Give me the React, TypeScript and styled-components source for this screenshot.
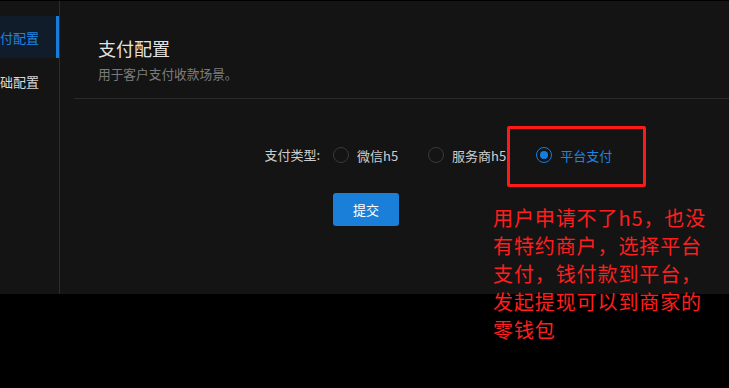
import styled, { createGlobalStyle } from 'styled-components';

const GlobalStyle = createGlobalStyle`
  html, body {
    margin: 0;
    padding: 0;
    background: #000;
  }
  body {
    font-family: "Noto Sans CJK SC", "Noto Sans", sans-serif;
  }
`;

const Page = styled.div`
  position: relative;
  min-height: 100vh;
  padding-top: 1px;
  box-sizing: border-box;
`;

const Shell = styled.div`
  height: 293px;
  display: flex;
  background: #141414;
`;

const Sidebar = styled.nav`
  width: 59px;
  flex: none;
  border-right: 1px solid #2d2d2d;
  padding-top: 15px;
  display: flex;
  flex-direction: column;
  gap: 2px;
`;

const MenuItem = styled.div<{ $active?: boolean }>`
  height: 42px;
  display: flex;
  align-items: center;
  justify-content: flex-end;
  padding-right: ${({ $active }) => ($active ? '17px' : '20px')};
  overflow: hidden;
  white-space: nowrap;
  font-size: 13px;
  color: ${({ $active }) => ($active ? '#1f84e0' : 'rgba(255,255,255,0.85)')};
  background: ${({ $active }) => ($active ? '#111c2b' : 'transparent')};
  border-right: ${({ $active }) => ($active ? '3px solid #177ddc' : 'none')};
`;

const Main = styled.main`
  flex: 1;
  margin-left: 14px;
  display: flex;
  flex-direction: column;
`;

const Header = styled.header`
  padding: 34px 24px 0;
  border-bottom: 1px solid #2a2a2a;
  box-sizing: border-box;
  height: 98px;
`;

const Title = styled.h2`
  margin: 0;
  font-size: 18px;
  line-height: 26px;
  font-weight: 400;
  color: rgba(255, 255, 255, 0.9);
`;

const Subtitle = styled.p`
  margin: 3px 0 0;
  font-size: 12.7px;
  line-height: 20px;
  color: rgba(255, 255, 255, 0.45);
`;

const Form = styled.form`
  margin-top: 40px;
  display: grid;
  grid-template-columns: 259px 1fr;
  row-gap: 22px;
  align-items: center;
`;

const Label = styled.label`
  text-align: right;
  padding-right: 13px;
  font-size: 13px;
  line-height: 32px;
  color: rgba(255, 255, 255, 0.8);
`;

const RadioGroup = styled.div`
  display: flex;
  align-items: center;
  height: 32px;
`;

const RadioOption = styled.span<{ $checked?: boolean }>`
  display: inline-flex;
  align-items: center;
  gap: 8px;
  margin-right: 30px;
  font-size: 13px;
  color: ${({ $checked }) => ($checked ? '#1f84e0' : 'rgba(255,255,255,0.8)')};
`;

const RadioDot = styled.span<{ $checked?: boolean }>`
  width: 14px;
  height: 14px;
  border-radius: 50%;
  border: 1px solid ${({ $checked }) => ($checked ? '#177ddc' : '#3a3a3a')};
  display: inline-flex;
  align-items: center;
  justify-content: center;
  &::after {
    content: '';
    width: 8px;
    height: 8px;
    border-radius: 50%;
    background: #177ddc;
    display: ${({ $checked }) => ($checked ? 'block' : 'none')};
  }
`;

const SubmitButton = styled.button`
  width: 66px;
  height: 33px;
  border: none;
  border-radius: 3px;
  background: #1a7fd9;
  color: #fff;
  font-family: inherit;
  font-size: 13px;
  cursor: pointer;
`;

const NoteBox = styled.div`
  position: absolute;
  left: 507px;
  top: 126px;
  width: 133px;
  height: 55px;
  border: 3px solid #ff1a1a;
  border-radius: 2px;
`;

const NoteText = styled.div`
  position: absolute;
  left: 493px;
  top: 204px;
  font-size: 20px;
  line-height: 28px;
  letter-spacing: 0.9px;
  color: #ff1e1e;
  white-space: nowrap;
`;

const payTypes = [
  { label: '微信h5', checked: false },
  { label: '服务商h5', checked: false },
  { label: '平台支付', checked: true },
];

export default function App() {
  return (
    <>
      <GlobalStyle />
      <Page>
        <Shell>
          <Sidebar>
            <MenuItem $active>支付配置</MenuItem>
            <MenuItem>基础配置</MenuItem>
          </Sidebar>
          <Main>
            <Header>
              <Title>支付配置</Title>
              <Subtitle>用于客户支付收款场景。</Subtitle>
            </Header>
            <Form onSubmit={(e) => e.preventDefault()}>
              <Label>支付类型:</Label>
              <RadioGroup>
                {payTypes.map((t) => (
                  <RadioOption key={t.label} $checked={t.checked}>
                    <RadioDot $checked={t.checked} />
                    {t.label}
                  </RadioOption>
                ))}
              </RadioGroup>
              <span />
              <div>
                <SubmitButton type="submit">提交</SubmitButton>
              </div>
            </Form>
          </Main>
        </Shell>
        <NoteBox />
        <NoteText>
          用户申请不了h5，也没
          <br />
          有特约商户，选择平台
          <br />
          支付，钱付款到平台，
          <br />
          发起提现可以到商家的
          <br />
          零钱包
        </NoteText>
      </Page>
    </>
  );
}
